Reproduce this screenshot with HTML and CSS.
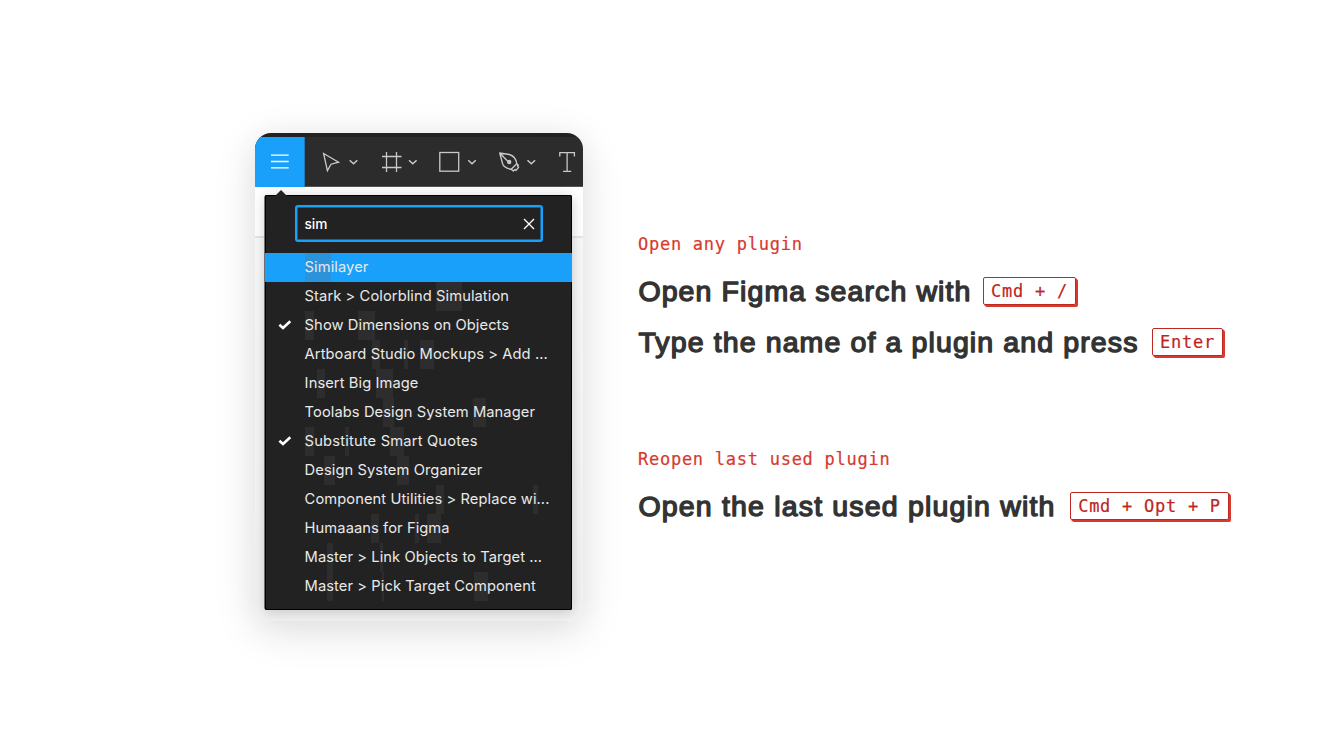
FILE: index.html
```
<!DOCTYPE html>
<html lang="en">
<head>
<meta charset="utf-8">
<title>Figma plugin shortcuts</title>
<link rel="stylesheet" href="styles.css">
</head>
<body>
<main class="page">
  <section class="window">
    <div class="toolbar">
      <div class="menu-button"><svg width="50" height="50" viewBox="0 0 50 50"><path d="M16 18.2H33.7M16 24.5H33.7M16 30.8H33.7" stroke="#fff" stroke-width="1.3"/></svg></div>
      <svg class="tools" width="278" height="50" viewBox="305 137 278 50" fill="none" stroke="#c9c9c9" stroke-width="1.3">
        <path d="M323.6 153.5L338.6 162.2L331 164.2L327.4 170.6Z"/>
        <path d="M386.5 152V172M396.5 152V172M382 156.5H401.5M382 167.5H401.5"/>
        <rect x="439.8" y="152.5" width="18.9" height="18.7"/>
        <g stroke-linejoin="round" stroke-width="1.4"><path d="M499.7 153L502.5 163.4Q503.5 167.8 511.2 169.2L516.8 163.8C516 157.5 512.6 155.4 509.2 154.5ZM499.7 153L508 161.5M511.2 169.2L513.3 170.9L515 169.4L516 170.4L518.6 167.4L517.5 166L518.3 165.2L516.8 163.8"/><circle cx="509.2" cy="162" r="1.5" fill="#c9c9c9"/></g>
        <path d="M559.8 156.5V152.7H574.4V156.5M567.1 152.7V171.4M563 171.4H571.2"/>
        <path d="M349.7 160.2L353.5 163.8L357.3 160.2M409 160.2L412.8 163.8L416.6 160.2M468.2 160.2L472 163.8L475.8 160.2M527.5 160.2L531.3 163.8L535.1 160.2" stroke-width="1.5"/>
      </svg>
    </div>
    <div class="canvas">
      <div class="panel">
        <svg class="pointer" width="12" height="6" viewBox="0 0 12 6"><path d="M0 6L6 0L12 6Z" fill="#222"/></svg>
        <div class="search"><span>sim</span><svg width="12" height="12" viewBox="0 0 12 12"><path d="M1 1L11 11M11 1L1 11" stroke="#fff" stroke-width="1.4"/></svg></div>
        <ul class="results">
          <li class="row selected"><i style="left:40px;width:26px"></i><span>Similayer</span></li>
          <li class="row"><i style="left:170.7px;width:26px"></i><span>Stark &gt; Colorblind Simulation</span></li>
          <li class="row"><i style="left:40px;width:9px"></i><i style="left:93.3px;width:16.7px"></i><svg class="check" width="14" height="10" viewBox="0 0 14 10"><path d="M1.4 4.8L5 8L12.3 1.3"/></svg><span>Show Dimensions on Objects</span></li>
          <li class="row"><i style="left:107px;width:8px"></i><i style="left:139px;width:4px"></i><i style="left:155.3px;width:13.7px"></i><span>Artboard Studio Mockups &gt; Add ...</span></li>
          <li class="row"><i style="left:52px;width:8px"></i><i style="left:111px;width:16.7px"></i><span>Insert Big Image</span></li>
          <li class="row"><i style="left:118.3px;width:10.7px"></i><i style="left:208px;width:13.3px"></i><span>Toolabs Design System Manager</span></li>
          <li class="row"><i style="left:40px;width:9px"></i><i style="left:80px;width:4px"></i><i style="left:125.3px;width:13.7px"></i><svg class="check" width="14" height="10" viewBox="0 0 14 10"><path d="M1.4 4.8L5 8L12.3 1.3"/></svg><span class="roomy">Substitute Smart Quotes</span></li>
          <li class="row"><i style="left:59px;width:11px"></i><i style="left:132px;width:12px"></i><span>Design System Organizer</span></li>
          <li class="row"><i style="left:170.7px;width:8.3px"></i><i style="left:268.3px;width:4.4px"></i><span>Component Utilities &gt; Replace wi...</span></li>
          <li class="row"><i style="left:106px;width:8px"></i><i style="left:150px;width:4px"></i><i style="left:162.3px;width:13.7px"></i><span>Humaaans for Figma</span></li>
          <li class="row"><i style="left:61.7px;width:6.6px"></i><i style="left:115px;width:3px"></i><span>Master &gt; Link Objects to Target ...</span></li>
          <li class="row"><i style="left:61.7px;width:6.6px"></i><i style="left:117px;width:2px"></i><i style="left:209px;width:14px"></i><span>Master &gt; Pick Target Component</span></li>
        </ul>
      </div>
    </div>
  </section>
  <section class="guide">
    <div class="group">
      <p class="eyebrow">Open any plugin</p>
      <div class="step"><svg class="title" width="345" height="34"><text x="0.4" y="27" textLength="332">Open Figma search with</text></svg><kbd class="key-slash">Cmd + /</kbd></div>
      <div class="step"><svg class="title" width="514" height="34"><text x="0.4" y="27" textLength="499">Type the name of a plugin and press</text></svg><kbd class="key-enter">Enter</kbd></div>
    </div>
    <div class="group">
      <p class="eyebrow">Reopen last used plugin</p>
      <div class="step"><svg class="title" width="432" height="34"><text x="0.4" y="27" textLength="416">Open the last used plugin with</text></svg><kbd class="key-last">Cmd + Opt + P</kbd></div>
    </div>
  </section>
</main>
</body>
</html>
```
FILE: styles.css
```
* { box-sizing: border-box; }
body { margin: 0; background: #fff; }
.page { display: flex; width: 1344px; height: 756px; padding: 133px 0 0 255px; overflow: hidden; }
.window { width: 328px; height: 488px; border-radius: 16px; overflow: hidden; background: #fff; box-shadow: 0 10px 42px rgba(0,0,0,.13), 0 0 30px rgba(0,0,0,.03); flex: none; }
.toolbar { display: flex; height: 54px; padding-top: 4px; background: linear-gradient(#222 4px, #2c2c2c 4px); border-bottom: 1px solid #555; }
.menu-button { width: 50px; height: 50px; background: #18a0fb; border-right: 1px solid #237ab6; flex: none; }
.toolbar svg { display: block; flex: none; }
.canvas { height: 434px; padding: 8px 0 0 10px; background: linear-gradient(transparent 49px, #e6e6e6 49px, #e6e6e6 51px, #f8f8f8 51px, #f2f2f2); }
.panel { position: relative; width: 307px; height: 415px; padding-top: 10px; border-radius: 2px; background: #222; box-shadow: inset 0 0 0 1px #000, -.5px 0 0 #000, 0 2px 14px rgba(0,0,0,.2); }
.pointer { position: absolute; left: 10px; top: -5px; }
.search { display: flex; align-items: center; justify-content: space-between; width: 248px; height: 37px; margin-left: 30px; padding: 0 6px 0 7px; border: 2px solid #18a0fb; border-radius: 3px; box-shadow: inset 0 0 0 .5px #18a0fb; color: #fff; font: 500 13.7px Inter, sans-serif; }
.search span { padding: 1px 0 0 .5px; }
.results { margin: 11px 0 0; padding: 0; list-style: none; }
.row { position: relative; height: 29px; padding-left: 40px; color: #e9e9e9; font: 400 14.7px/28px Inter, sans-serif; letter-spacing: .08px; white-space: nowrap; }
.row span { position: relative; left: -.4px; }
.row .roomy { letter-spacing: .18px; }
.row i { position: absolute; top: 0; height: 29px; background: #2d2d2d; }
.selected { background: #18a0fb; }
.selected i { background: #2b93dc; }
.check { position: absolute; left: 13px; top: 9px; fill: none; stroke: #fff; stroke-width: 2.6; }
.guide { margin-left: 55px; padding-top: 98px; flex: none; }
.group { height: 215px; }
.eyebrow { height: 34px; margin: 0; color: #d63a2f; font: 17px/26px "DejaVu Sans Mono", monospace; letter-spacing: .74px; -webkit-text-stroke: .2px; }
.step { display: flex; align-items: center; height: 51px; }
.title { display: block; overflow: visible; fill: #333; stroke: #333; stroke-width: 1.4px; stroke-linejoin: round; font: 28.5px "Liberation Sans", Arial, sans-serif; }
kbd { height: 28px; border: 1px solid #bd2920; border-radius: 2px; box-shadow: 1px 1px #d63a2f, 2px 2px #d63a2f; color: #bd261d; text-align: center; font: 17px/27px "DejaVu Sans Mono", monospace; letter-spacing: .74px; white-space: nowrap; -webkit-text-stroke: .2px; }
.key-slash { width: 93px; }
.key-enter { width: 71px; }
.key-last { width: 159px; }
```
